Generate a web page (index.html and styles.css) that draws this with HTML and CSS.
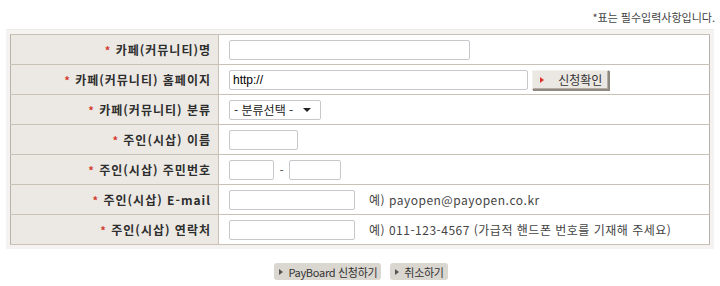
FILE: index.html
```html
<!DOCTYPE html>
<html lang="ko">
<head>
  <meta charset="UTF-8" />
  <title>카페 신청</title>
  <link rel="stylesheet" href="styles.css">
</head>
<body>
  <div class="wrap">
    <p class="notice">*표는 필수입력사항입니다.</p>

    <div class="frame">
      <table class="apply">
        <tr>
          <th><span class="req">*</span> 카페(커뮤니티)명</th>
          <td><input type="text" class="w240"></td>
        </tr>
        <tr>
          <th><span class="req">*</span> 카페(커뮤니티) 홈페이지</th>
          <td>
            <input type="text" class="w298" value="http://">
            <button type="button" class="check"><span class="arrow"></span>신청확인</button>
          </td>
        </tr>
        <tr>
          <th><span class="req">*</span> 카페(커뮤니티) 분류</th>
          <td>
            <div class="select">- 분류선택 - <span class="down"></span></div>
          </td>
        </tr>
        <tr>
          <th><span class="req">*</span> 주인(시삽) 이름</th>
          <td><input type="text" class="w68"></td>
        </tr>
        <tr>
          <th><span class="req">*</span> 주인(시삽) 주민번호</th>
          <td>
            <input type="text" class="w45">
            <span class="dash">-</span>
            <input type="text" class="w52">
          </td>
        </tr>
        <tr>
          <th><span class="req">*</span> 주인(시삽) E-mail</th>
          <td><input type="text" class="w126"><span class="hint">예) payopen@payopen.co.kr</span></td>
        </tr>
        <tr>
          <th><span class="req">*</span> 주인(시삽) 연락처</th>
          <td><input type="text" class="w126"><span class="hint">예) 011-123-4567 (가급적 핸드폰 번호를 기재해 주세요)</span></td>
        </tr>
      </table>
    </div>

    <div class="actions">
      <button type="button" class="btn"><span class="tri"></span>PayBoard 신청하기</button>
      <button type="button" class="btn"><span class="tri"></span>취소하기</button>
    </div>
  </div>
</body>
</html>
```

FILE: styles.css
```css
body {
  margin: 0;
  padding: 0;
  background: #fff;
  font-family: "Noto Sans CJK KR", "Noto Sans", sans-serif;
  font-size: 12px;
  color: #333;
}

.wrap {
  width: 720px;
}

.notice {
  margin: 0;
  padding: 9px 5px 0 0;
  height: 20px;
  text-align: right;
  font-size: 11px;
  color: #444;
  line-height: 16px;
}

.frame {
  margin: 0 6px 0 6px;
  padding: 4px;
  background: #f4f3f1;
  border-top: 1px solid #eeede9;
}

.apply {
  width: 100%;
  border-collapse: collapse;
  border: 1px solid #b8b1a8;
}

.apply tr {
  height: 30px;
}

.apply th {
  width: 200px;
  padding: 0 7px 0 0;
  background: #ece9e4;
  border-top: 1px solid #c9c0b6;
  border-bottom: 1px solid #c9c0b6;
  border-right: 1px solid #c9c0b6;
  text-align: right;
  font-weight: bold;
  font-size: 12px;
  letter-spacing: 1px;
  color: #2e2e2e;
  white-space: nowrap;
}

.apply td {
  padding: 0 0 0 10px;
  background: #fff;
  border-top: 1px solid #c9c0b6;
  border-bottom: 1px solid #c9c0b6;
  white-space: nowrap;
}

.req {
  color: #d23b2e;
  font-size: 11px;
}

input[type="text"] {
  box-sizing: border-box;
  height: 20px;
  margin: 0;
  padding: 1px 3px;
  border: 1px solid #c8c8cc;
  border-radius: 2px;
  font-family: "Liberation Sans", sans-serif;
  font-size: 12px;
  color: #000;
  vertical-align: middle;
}

.w240 { width: 241px; }
.w298 { width: 299px; }
.w68 { width: 69px; }
.w45 { width: 45px; }
.w52 { width: 52px; }
.w126 { width: 126px; }

.check {
  box-sizing: border-box;
  height: 20px;
  width: 77px;
  margin: 0 0 0 1px;
  padding: 0 6px 0 0;
  border: 1px solid #8f8880;
  border-top-color: #f4f2ee;
  border-left-color: #f4f2ee;
  box-shadow: inset -1px -1px 0 #b6aea4, 1px 1px 0 #8f8880;
  background: #ebe7e2;
  font-family: "Noto Sans CJK KR", sans-serif;
  font-size: 12px;
  color: #333;
  vertical-align: middle;
  display: inline-flex;
  align-items: center;
  justify-content: space-between;
}

.check .arrow {
  width: 0;
  height: 0;
  margin-left: 7px;
  border-left: 4px solid #d9342a;
  border-top: 3px solid transparent;
  border-bottom: 3px solid transparent;
}

.select {
  box-sizing: border-box;
  display: inline-flex;
  align-items: center;
  width: 92px;
  height: 20px;
  padding: 0 0 0 4px;
  border: 1px solid #c8c8cc;
  border-radius: 2px;
  font-size: 12px;
  color: #222;
  vertical-align: middle;
}

.select .down {
  width: 0;
  height: 0;
  margin-left: 10px;
  border-top: 4px solid #222;
  border-left: 4px solid transparent;
  border-right: 4px solid transparent;
}

.dash {
  display: inline-block;
  margin: 0 2px;
  color: #555;
  vertical-align: middle;
}

.hint {
  margin-left: 14px;
  font-size: 12px;
  letter-spacing: 0.5px;
  color: #444;
  vertical-align: middle;
}

.actions {
  display: flex;
  justify-content: center;
  gap: 9px;
  padding: 14px 0 0 0;
  margin-left: 2px;
}

.btn {
  display: inline-flex;
  align-items: center;
  height: 17px;
  padding: 0 4px 0 5px;
  border: none;
  border-radius: 3px;
  background: #dad6d0;
  font-family: "Noto Sans CJK KR", sans-serif;
  font-size: 11px;
  letter-spacing: -0.3px;
  color: #333;
}

.btn .tri {
  width: 0;
  height: 0;
  margin-right: 5px;
  border-left: 4px solid #555;
  border-top: 3px solid transparent;
  border-bottom: 3px solid transparent;
}
```
